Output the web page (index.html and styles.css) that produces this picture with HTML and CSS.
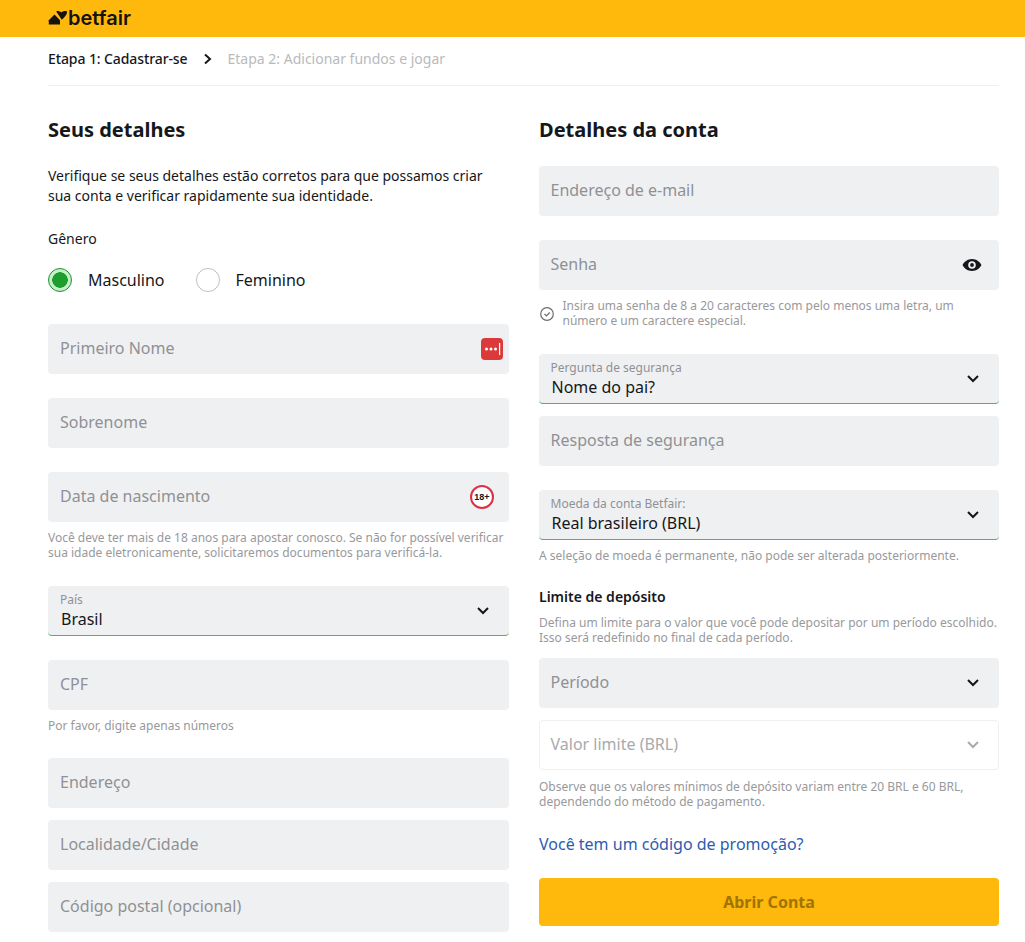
FILE: index.html
```html
<!DOCTYPE html>
<html lang="pt-BR">
<head>
<meta charset="utf-8">
<title>Betfair - Cadastrar-se</title>
<link rel="stylesheet" href="styles.css">
</head>
<body>
<header class="topbar">
  <div class="logo">
    <svg class="logo-mark" width="20" height="14" viewBox="0 0 20 14"><path d="M6.500 3.500 12 9.300V13.500H.8V9.300Z" fill="#17130c"/><path d="M8.200.5C9.500-.3 11.700 0 13.300 1.600 14.900 0 17.300-.3 19 .5 19.700 3.200 16.500 6 13.800 8.800Z" fill="#17130c"/></svg>
    <span class="logo-text">betfair</span>
  </div>
</header>
<main class="page">
  <nav class="steps">
    <span class="step-on">Etapa 1: Cadastrar-se</span>
    <svg class="step-arrow" width="10" height="12" viewBox="0 0 10 12"><path d="M2 1.500 7 6l-5 4.500" fill="none" stroke="#15171b" stroke-width="2"/></svg>
    <span class="step-off">Etapa 2: Adicionar fundos e jogar</span>
  </nav>
  <div class="columns">
    <section class="col">
      <h2>Seus detalhes</h2>
      <p class="intro">Verifique se seus detalhes estão corretos para que possamos criar sua conta e verificar rapidamente sua identidade.</p>
      <div class="gender-label">Gênero</div>
      <div class="radios">
        <label class="radio"><span class="dot dot-on"></span>Masculino</label>
        <label class="radio"><span class="dot"></span>Feminino</label>
      </div>
      <div class="field mt0"><span class="ph">Primeiro Nome</span>
        <svg class="end" width="22" height="22" viewBox="0 0 22 22"><rect width="22" height="22" rx="4" fill="#dc3a3a"/><circle cx="5.500" cy="11" r="1.500" fill="#fff"/><circle cx="10" cy="11" r="1.500" fill="#fff"/><circle cx="14.500" cy="11" r="1.500" fill="#fff"/><rect x="18" y="5" width="1.200" height="12" fill="#fff"/></svg>
      </div>
      <div class="field"><span class="ph">Sobrenome</span></div>
      <div class="field"><span class="ph">Data de nascimento</span>
        <span class="age">18+</span>
      </div>
      <p class="hint">Você deve ter mais de 18 anos para apostar conosco. Se não for possível verificar sua idade eletronicamente, solicitaremos documentos para verificá-la.</p>
      <div class="field select after-hint">
        <span class="sel-label">País</span><span class="sel-value">Brasil</span>
        <svg class="chev" width="14" height="10" viewBox="0 0 14 10"><path d="M2 2l5 5 5-5" fill="none" stroke="#15171b" stroke-width="2"/></svg>
      </div>
      <div class="field"><span class="ph">CPF</span></div>
      <p class="hint">Por favor, digite apenas números</p>
      <div class="field after-cpf"><span class="ph">Endereço</span></div>
      <div class="field tight"><span class="ph">Localidade/Cidade</span></div>
      <div class="field tight"><span class="ph">Código postal (opcional)</span></div>
    </section>
    <section class="col col-right">
      <h2>Detalhes da conta</h2>
      <div class="field first-right"><span class="ph">Endereço de e-mail</span></div>
      <div class="field"><span class="ph">Senha</span>
        <svg class="end eye" width="20" height="14" viewBox="0 0 20 14"><path fill-rule="evenodd" d="M10 1C5.500 1 2 4 .5 7 2 10 5.500 13 10 13s8-3 9.500-6C18 4 14.500 1 10 1Zm0 2.200a3.800 3.800 0 1 1 0 7.600 3.800 3.800 0 0 1 0-7.600Z" fill="#15171b"/><circle cx="10" cy="7" r="1.900" fill="#15171b"/></svg>
      </div>
      <div class="pw-hint">
        <svg class="check" width="16" height="16" viewBox="0 0 16 16"><circle cx="8" cy="8" r="6.300" fill="none" stroke="#6c6f73" stroke-width="1.200"/><path d="M5.500 8l2 2 3.200-3.500" fill="none" stroke="#6c6f73" stroke-width="1.200"/></svg>
        <p class="hint flat">Insira uma senha de 8 a 20 caracteres com pelo menos uma letra, um número e um caractere especial.</p>
      </div>
      <div class="field select after-pw">
        <span class="sel-label">Pergunta de segurança</span><span class="sel-value">Nome do pai?</span>
        <svg class="chev" width="14" height="10" viewBox="0 0 14 10"><path d="M2 2l5 5 5-5" fill="none" stroke="#15171b" stroke-width="2"/></svg>
      </div>
      <div class="field tight"><span class="ph">Resposta de segurança</span></div>
      <div class="field select">
        <span class="sel-label">Moeda da conta Betfair:</span><span class="sel-value">Real brasileiro (BRL)</span>
        <svg class="chev" width="14" height="10" viewBox="0 0 14 10"><path d="M2 2l5 5 5-5" fill="none" stroke="#15171b" stroke-width="2"/></svg>
      </div>
      <p class="hint">A seleção de moeda é permanente, não pode ser alterada posteriormente.</p>
      <h3>Limite de depósito</h3>
      <p class="hint limit">Defina um limite para o valor que você pode depositar por um período escolhido. Isso será redefinido no final de cada período.</p>
      <div class="field after-limit"><span class="ph">Período</span>
        <svg class="chev mid" width="14" height="10" viewBox="0 0 14 10"><path d="M2 2l5 5 5-5" fill="none" stroke="#15171b" stroke-width="2"/></svg>
      </div>
      <div class="field tight disabled"><span class="ph">Valor limite (BRL)</span>
        <svg class="chev mid" width="14" height="10" viewBox="0 0 14 10"><path d="M2 2l5 5 5-5" fill="none" stroke="#a8aaad" stroke-width="2"/></svg>
      </div>
      <p class="hint value-hint">Observe que os valores mínimos de depósito variam entre 20 BRL e 60 BRL, dependendo do método de pagamento.</p>
      <a class="promo" href="#">Você tem um código de promoção?</a>
      <button class="submit" type="button">Abrir Conta</button>
    </section>
  </div>
</main>
</body>
</html>
```
FILE: styles.css
```css
* { box-sizing: border-box; }
html, body { margin: 0; padding: 0; }
body {
  height: 942px;
  overflow: hidden;
  background: #fff;
  color: #15171b;
  font-family: "Noto Sans", "Open Sans", sans-serif;
}
.topbar { height: 37px; background: #ffb80c; padding: 0 48px; display: flex; align-items: center; }
.logo { display: flex; align-items: center; margin-top: -1px; }
.logo-mark { margin-right: 0; }
.logo-text { font-family: Inter, sans-serif; font-size: 20px; font-weight: 600; line-height: 20px; color: #17130c; letter-spacing: 0; }
.page { padding: 0 26px 0 48px; }
.steps { height: 49px; display: flex; align-items: center; border-bottom: 1px solid #eeeff0; font-size: 14px; padding-bottom: 5px; }
.step-on { font-weight: 500; letter-spacing: -0.1px; }
.step-arrow { margin: 0 15px 0 15px; }
.step-off { color: #b9babc; }
.columns { display: flex; gap: 30px; padding-top: 29px; }
.col { width: 461px; }
.col-right { width: 460px; }
h2 { margin: 0; font-size: 20px; line-height: 30px; font-weight: 700; color: #15171b; }
.intro { margin: 21px 0 0; font-size: 14px; line-height: 20px; }
.gender-label { margin-top: 23px; font-size: 14px; line-height: 20px; }
.radios { display: flex; gap: 31px; margin-top: 19px; height: 24px; margin-bottom: 32px; }
.radio { display: flex; align-items: center; gap: 16px; font-size: 16px; line-height: 24px; }
.dot { width: 24px; height: 24px; border-radius: 50%; border: 1px solid #bdbec0; background: #fff; flex: none; }
.dot-on { border-color: #1f8f2c; background: radial-gradient(circle, #1f9e2e 0 7.500px, #c4efc8 8px 100%); }
.field { position: relative; height: 50px; border-radius: 4px; background: #eff0f2; margin-top: 24px; padding: 0 12px; display: flex; align-items: center; font-size: 16px; }
.col-right .field { padding-left: 11.500px; }
.mt0 { margin-top: 0; }
.tight { margin-top: 12px; }
.ph { color: #909194; line-height: 24px; margin-top: -2px; }
.end { position: absolute; right: 6px; top: 14px; }
.eye { right: 17px; top: 18px; }
.age { position: absolute; right: 15px; top: 13px; width: 24px; height: 24px; border-radius: 50%; border: 2px solid #dc3045; background: #fff; font-size: 9px; font-weight: 700; line-height: 20px; text-align: center; font-family: "Liberation Sans", sans-serif; }
.hint { margin: 8px 0 0; font-size: 12px; line-height: 15px; color: #98999c; }
.hint.flat { margin: 0; }
.after-hint { margin-top: 26px; }
.after-cpf { margin-top: 25px; }
.select { display: block; height: 50px; border-bottom: 1px solid #4cb652; padding-top: 6px; }
.sel-label { display: block; font-size: 12px; line-height: 15px; color: #909194; }
.sel-value { display: block; font-size: 16px; line-height: 22px; color: #15171b; padding-left: 1px; margin-top: 1px; }
.chev { position: absolute; right: 19px; top: 20px; }
.pw-hint { display: flex; align-items: center; margin-top: 8px; }
.check { flex: none; margin-right: 7.500px; margin-top: 1px; }
.first-right { margin-top: 21px; }
.after-pw { margin-top: 26px; }
h3 { margin: 24px 0 0; font-size: 14px; line-height: 20px; font-weight: 600; }
.hint.limit { margin-top: 8px; }
.after-limit { margin-top: 13px; }
.col-right .disabled { background: #fff; border: 1px solid #eeeff1; padding-left: 10.500px; }
.disabled .ph { color: #a8aaad; }
.disabled .chev { right: 18px; top: 19px; }
.value-hint { margin-top: 9px; }
.promo { display: block; margin-top: 23px; font-size: 16px; line-height: 24px; color: #2b5cb0; text-decoration: none; }
.submit { display: block; width: 100%; height: 48px; margin-top: 22px; border: 0; border-radius: 4px; background: #ffb80c; color: #a07400; font-family: inherit; font-size: 16px; font-weight: 700; }
```
